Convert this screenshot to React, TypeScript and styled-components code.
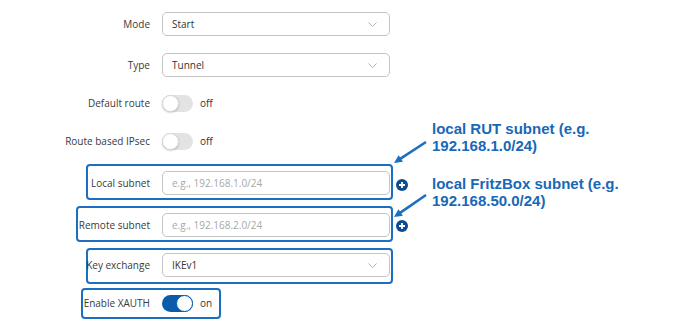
import React from "react";
import styled, { createGlobalStyle } from "styled-components";

const GlobalStyle = createGlobalStyle`
  html, body {
    margin: 0;
    padding: 0;
    background: #ffffff;
  }
  body {
    font-family: "Open Sans", "Noto Sans", sans-serif;
    color: #333333;
  }
`;

const Page = styled.div`
  position: relative;
  width: 690px;
  height: 333px;
  padding-top: 4px;
  box-sizing: border-box;
  overflow: hidden;
`;

const Form = styled.div`
  display: flex;
  flex-direction: column;
`;

const Row = styled.div<{ $h: number }>`
  position: relative;
  height: ${(p) => p.$h}px;
  display: grid;
  grid-template-columns: 150px 260px;
  column-gap: 12px;
  align-items: center;
`;

const Label = styled.div`
  text-align: right;
  font-size: 10px;
  color: #3a3a3a;
  white-space: nowrap;
  position: relative;
  z-index: 1;
`;

const Control = styled.div`
  display: flex;
  align-items: center;
  position: relative;
  z-index: 1;
`;

const Field = styled.div<{ $placeholder?: boolean }>`
  flex: 0 0 228px;
  width: 228px;
  height: 24px;
  box-sizing: border-box;
  border: 1px solid #c4c4c4;
  border-radius: 5px;
  padding: 0 12px 0 9px;
  display: flex;
  align-items: center;
  justify-content: space-between;
  font-size: 10px;
  color: ${(p) => (p.$placeholder ? "#a8a8a8" : "#333333")};
  background: #ffffff;
`;

const Chevron = () => (
  <svg width="9" height="5" viewBox="0 0 9 5">
    <path d="M0.5 0.5 L4.5 4.5 L8.5 0.5" fill="none" stroke="#a9a9a9" strokeWidth="0.9" />
  </svg>
);

const Track = styled.div<{ $on?: boolean }>`
  position: relative;
  width: 31px;
  height: 17px;
  border-radius: 9px;
  background: ${(p) => (p.$on ? "#0b5bab" : "#e3e3e3")};
`;

const Knob = styled.div<{ $on?: boolean }>`
  position: absolute;
  top: 0;
  left: ${(p) => (p.$on ? "14px" : "0")};
  width: 17px;
  height: 17px;
  box-sizing: border-box;
  border-radius: 50%;
  background: #ffffff;
  border: 1px solid ${(p) => (p.$on ? "#0b5bab" : "#d6d6d6")};
  box-shadow: ${(p) => (p.$on ? "none" : "0 1px 2px rgba(0, 0, 0, 0.18)")};
`;

const State = styled.span`
  margin-left: 7px;
  font-size: 10px;
  color: #333333;
`;

const AddButton = styled.div`
  flex: 0 0 12px;
  margin-left: 6px;
  margin-top: 3px;
  width: 12px;
  height: 12px;
  border-radius: 50%;
  background: #0d4b91;
  display: flex;
  align-items: center;
  justify-content: center;
`;

const Callout = styled.div<{ $left: number; $width: number; $top: number; $bottom: number }>`
  position: absolute;
  left: ${(p) => p.$left}px;
  width: ${(p) => p.$width}px;
  top: ${(p) => p.$top}px;
  bottom: ${(p) => p.$bottom}px;
  box-sizing: border-box;
  border: 2px solid #1b6fc0;
  border-radius: 4px;
`;

const Note = styled.div<{ $top: number }>`
  position: absolute;
  left: 432px;
  top: ${(p) => p.$top}px;
  font-family: "Liberation Sans", Arial, sans-serif;
  font-weight: bold;
  font-size: 15px;
  line-height: 17px;
  color: #1868b7;
  white-space: pre-line;
`;

const Arrows = styled.svg`
  position: absolute;
  left: 0;
  top: 0;
  pointer-events: none;
`;

const Switch = ({ on }: { on?: boolean }) => (
  <>
    <Track $on={on}>
      <Knob $on={on} />
    </Track>
    <State>{on ? "on" : "off"}</State>
  </>
);

const Plus = () => (
  <AddButton>
    <svg width="8" height="8" viewBox="0 0 8 8">
      <path d="M4 1 V7 M1 4 H7" stroke="#ffffff" strokeWidth="1.8" />
    </svg>
  </AddButton>
);

const Arrow = ({ x1, y1, x2, y2 }: { x1: number; y1: number; x2: number; y2: number }) => {
  const ang = Math.atan2(y2 - y1, x2 - x1);
  const len = 9;
  const spread = 0.45;
  const ax = x2 - len * Math.cos(ang - spread);
  const ay = y2 - len * Math.sin(ang - spread);
  const bx = x2 - len * Math.cos(ang + spread);
  const by = y2 - len * Math.sin(ang + spread);
  const sx = x2 - 6 * Math.cos(ang);
  const sy = y2 - 6 * Math.sin(ang);
  return (
    <g>
      <line x1={x1} y1={y1} x2={sx} y2={sy} stroke="#1b6fc0" strokeWidth="2.6" />
      <polygon points={`${x2},${y2} ${ax},${ay} ${bx},${by}`} fill="#1b6fc0" />
    </g>
  );
};

export default function App() {
  return (
    <>
      <GlobalStyle />
      <Page>
        <Form>
          <Row $h={40}>
            <Label>Mode</Label>
            <Control>
              <Field>
                Start
                <Chevron />
              </Field>
            </Control>
          </Row>
          <Row $h={42}>
            <Label>Type</Label>
            <Control>
              <Field>
                Tunnel
                <Chevron />
              </Field>
            </Control>
          </Row>
          <Row $h={34}>
            <Label>Default route</Label>
            <Control>
              <Switch />
            </Control>
          </Row>
          <Row $h={42}>
            <Label>Route based IPsec</Label>
            <Control>
              <Switch />
            </Control>
          </Row>
          <Row $h={42}>
            <Callout $left={86} $width={307} $top={2} $bottom={4} />
            <Label>Local subnet</Label>
            <Control>
              <Field $placeholder>e.g., 192.168.1.0/24</Field>
              <Plus />
            </Control>
          </Row>
          <Row $h={41}>
            <Callout $left={76} $width={317} $top={2} $bottom={3} />
            <Label>Remote subnet</Label>
            <Control>
              <Field $placeholder>e.g., 192.168.2.0/24</Field>
              <Plus />
            </Control>
          </Row>
          <Row $h={40}>
            <Callout $left={86} $width={307} $top={3} $bottom={1} />
            <Label>Key exchange</Label>
            <Control>
              <Field>
                IKEv1
                <Chevron />
              </Field>
            </Control>
          </Row>
          <Row $h={36}>
            <Callout $left={81} $width={140} $top={3} $bottom={2} />
            <Label>Enable XAUTH</Label>
            <Control>
              <Switch on />
            </Control>
          </Row>
        </Form>

        <Note $top={120}>{"local RUT subnet (e.g.\n192.168.1.0/24)"}</Note>
        <Note $top={175}>{"local FritzBox subnet (e.g.\n192.168.50.0/24)"}</Note>

        <Arrows width="690" height="333">
          <Arrow x1={426} y1={142} x2={394} y2={163} />
          <Arrow x1={426} y1={195} x2={394} y2={217} />
        </Arrows>
      </Page>
    </>
  );
}
